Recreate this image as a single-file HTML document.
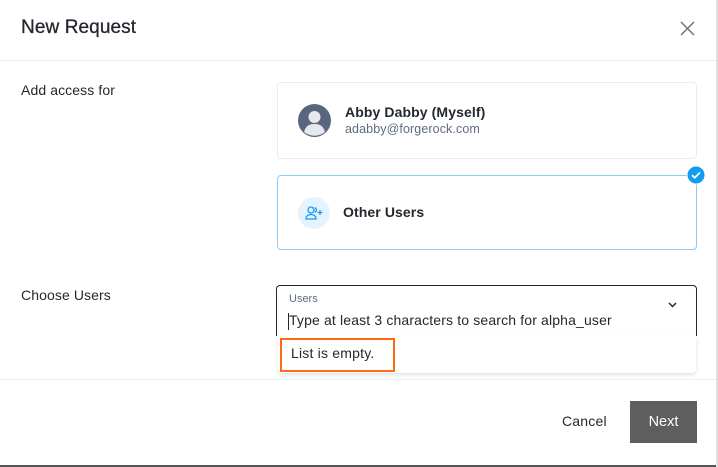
<!DOCTYPE html>
<html><head><meta charset="utf-8"><style>
*{box-sizing:border-box;margin:0;padding:0}
body{width:718px;height:467px;background:#fff;font-family:"Liberation Sans",sans-serif;color:#23282e;position:relative;overflow:hidden}
.a{position:absolute;white-space:nowrap}
</style></head><body>
<div class="a" style="left:21px;top:17px;font-size:19px;color:#23282e;letter-spacing:0.1px;font-weight:500;-webkit-text-stroke:0.3px #23282e">New Request</div>
<svg class="a" style="left:680px;top:21px" width="15" height="15" viewBox="0 0 15 15"><path d="M1 1L14 14M14 1L1 14" stroke="#6b7280" stroke-width="1.5"/></svg>
<div class="a" style="left:0;top:60px;width:718px;height:1px;background:#e7eef4"></div>

<div class="a" style="left:21px;top:82px;font-size:14px;letter-spacing:0.1px">Add access for</div>
<div class="a" style="left:21px;top:287px;font-size:14px;letter-spacing:0.1px">Choose Users</div>

<div class="a" style="left:277px;top:82px;width:420px;height:77px;border:1px solid #e7eef4;border-radius:4px"></div>
<svg class="a" style="left:298px;top:104px" width="33" height="33" viewBox="0 0 33 33"><circle cx="16.5" cy="16.5" r="16.5" fill="#5a6580"/><circle cx="16.5" cy="13" r="6" fill="#e5e8ec"/><path d="M6 28C8 21 12 20 16.5 20S25 21 27 28A16.5 16.5 0 0 1 6 28Z" fill="#e5e8ec"/></svg>
<div class="a" style="left:345px;top:104px;font-size:14px;font-weight:bold;letter-spacing:0.1px">Abby Dabby (Myself)</div>
<div class="a" style="left:345px;top:122px;font-size:12.5px;color:#5e6b80;letter-spacing:0.1px">adabby@forgerock.com</div>

<div class="a" style="left:277px;top:175px;width:420px;height:75px;border:1px solid #8bcbf9;border-radius:4px"></div>
<svg class="a" style="left:686px;top:165px" width="20" height="20" viewBox="0 0 20 20"><circle cx="10" cy="10" r="9" fill="#109cf1" stroke="#fff" stroke-width="1"/><path d="M6 10.2l2.7 2.6L14 7.5" stroke="#fff" stroke-width="1.8" fill="none"/></svg>
<div class="a" style="left:298px;top:197px;width:32px;height:32px;border-radius:50%;background:#e4f3fe"></div>
<svg class="a" style="left:305px;top:205px" width="18" height="16" viewBox="0 0 18 16"><circle cx="6" cy="5" r="3" fill="none" stroke="#109cf1" stroke-width="1.3"/><path d="M1 14c0-3 2-4.5 5-4.5s5 1.5 5 4.5z" fill="none" stroke="#109cf1" stroke-width="1.3"/><path d="M10 2.5a3 3 0 0 1 0 5" fill="none" stroke="#109cf1" stroke-width="1.3"/><path d="M15 5v5M12.5 7.5h5" stroke="#109cf1" stroke-width="1.3"/></svg>
<div class="a" style="left:343px;top:204px;font-size:14px;font-weight:bold;letter-spacing:0.1px">Other Users</div>

<div class="a" style="left:276px;top:285px;width:421px;height:51px;border:1.5px solid #23282e;border-bottom:none;border-radius:4px 4px 0 0"></div>
<div class="a" style="left:289px;top:293px;font-size:11px;color:#5e6b80">Users</div>
<svg class="a" style="left:668px;top:302px" width="9" height="6" viewBox="0 0 9 6"><path d="M1 1l3.5 3.5L8 1" stroke="#23282e" stroke-width="1.5" fill="none"/></svg>
<div class="a" style="left:288px;top:313px;width:1px;height:17px;background:#23282e"></div>
<div class="a" style="left:289px;top:312px;font-size:14px;letter-spacing:0.15px;color:#23282e">Type at least 3 characters to search for alpha_user</div>
<div class="a" style="left:278px;top:336px;width:418px;height:37px;background:#fff;box-shadow:0 2px 4px rgba(0,0,0,0.12);border-radius:0 0 4px 4px"></div>
<div class="a" style="left:280px;top:338px;width:115px;height:34px;border:2px solid #ff6a13"></div>
<div class="a" style="left:291px;top:345px;font-size:14px;letter-spacing:0.2px;color:#23282e">List is empty.</div>

<div class="a" style="left:0;top:379px;width:718px;height:1px;background:#e7eef4"></div>
<div class="a" style="left:562px;top:413px;font-size:14px;letter-spacing:0.2px">Cancel</div>
<div class="a" style="left:630px;top:401px;width:67px;height:42px;background:#5e5e5e;color:#fff;font-size:14.5px;text-align:center;line-height:42px">Next</div>
<div class="a" style="left:0;top:465px;width:718px;height:2px;background:#555"></div>
<div class="a" style="left:716px;top:0;width:2px;height:467px;background:#e0e0e0"></div>
</body></html>
